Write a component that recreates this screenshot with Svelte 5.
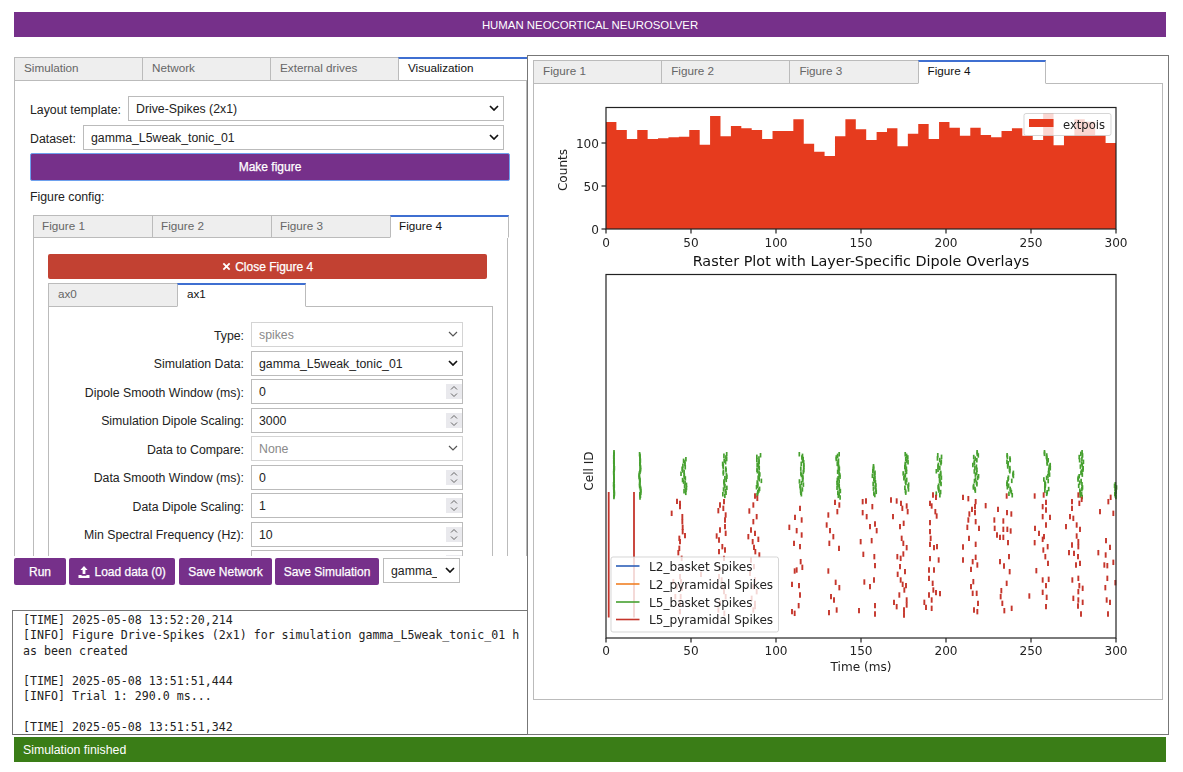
<script>
  const mainTabs = ['Simulation', 'Network', 'External drives', 'Visualization'];
  const figTabs = ['Figure 1', 'Figure 2', 'Figure 3', 'Figure 4'];
  const rows = [
    { label: 'Type:', kind: 'select', value: 'spikes', disabled: true },
    { label: 'Simulation Data:', kind: 'select', value: 'gamma_L5weak_tonic_01' },
    { label: 'Dipole Smooth Window (ms):', kind: 'number', value: '0' },
    { label: 'Simulation Dipole Scaling:', kind: 'number', value: '3000' },
    { label: 'Data to Compare:', kind: 'select', value: 'None', disabled: true },
    { label: 'Data Smooth Window (ms):', kind: 'number', value: '0' },
    { label: 'Data Dipole Scaling:', kind: 'number', value: '1' },
    { label: 'Min Spectral Frequency (Hz):', kind: 'number', value: '10' },
    { label: '', kind: 'number', value: '' }
  ];

  // histogram: bar tops read from the reference, in page px
  const tops = [216,240,267,240,267,265,262,260,240,284,198,259,228,235,240,267,243,243,208,281,305,318,259,208,238,270,246,235,289,251,222,267,216,233,257,233,255,262,243,235,257,270,190,286,257,208,215,255,279];
  const barW = 510 / tops.length;
  const histPath = 'M606 229 ' + tops.map((t, i) => {
    const y = 50 + t / 3;
    return `L${606 + i * barW} ${y} L${606 + (i + 1) * barW} ${y}`;
  }).join(' ') + ' L1116 229 Z';

  const ticks = [0, 50, 100, 150, 200, 250, 300].map((v) => ({ v, x: 606 + v * 1.7 }));

  const leftSpikes = [
    [321,184],[330,190],[330,200],[305,220],[337,230],[337,245],[338,262],[338,275],[328,295],[345,287],[330,305],[328,325],[325,338],[335,355],[336,385],[330,410],[310,425],[333,425],[320,440],[336,445],[332,470],[316,470],[330,490],[330,515],[393,403],
    [450,195],[462,185],[445,212],[460,205],[467,225],[465,240],[450,270],[465,260],[440,288],[467,280],[447,300],[457,320],[465,330],[447,335],[462,355],[450,385],[447,410],[455,420],[458,440],[462,455],[467,470],[450,490],[445,510],[463,520],
    [555,168],[562,175],[550,195],[538,213],[560,230],[550,245],[543,270],[555,280],[535,290],[548,305],[565,298],[552,322],[556,335],[568,345],[543,360],[552,380],[540,400],[555,420],[550,440],[560,455],[545,475],[555,490],[550,510],[555,500],
    [690,205],[675,232],[695,240],[658,262],[680,272],[695,285],[672,310],[690,320],[692,365],[697,382],[680,390],[674,393],[666,433],[687,437],[690,465],[686,497],[666,515],[674,520],
    [795,187],[808,195],[802,215],[775,225],[770,255],[780,272],[790,290],[778,310],[807,325],[775,393],[797,427],[808,443],[783,470],[792,480],[800,510],[777,518],[867,512]
  ];
  const rightSpikes = [
    [8,185],[18,183],[8,218],[20,230],[37,200],[30,260],[45,252],[50,272],[35,302],[2,305],[10,343],[43,350],[45,377],[13,426],[30,440],[42,420],[45,497],[45,522],
    [93,180],[110,183],[123,190],[127,205],[140,198],[143,215],[99,230],[120,260],[131,250],[125,295],[130,310],[140,323],[112,350],[122,355],[130,342],[120,380],[135,395],[113,403],[122,420],[128,433],[138,437],[133,450],[118,465],[102,487],[110,500],[140,480],[140,495],[132,510],[132,525],
    [219,165],[228,172],[210,190],[215,198],[226,215],[230,228],[210,248],[210,275],[212,295],[210,313],[222,323],[231,320],[210,356],[236,360],[222,390],[207,390],[207,415],[218,430],[220,450],[207,465],[228,458],[240,461],[193,487],[198,502],[215,480],[215,505],
    [309,172],[325,176],[347,185],[345,200],[336,208],[345,218],[328,222],[325,240],[347,245],[322,262],[357,265],[327,295],[347,313],[309,321],[347,352],[309,360],[338,365],[352,375],[333,388],[340,425],[333,440],[338,460],[350,460],[354,490],[342,510],[352,515],[377,197],
    [440,168],[414,208],[441,218],[454,222],[403,240],[430,243],[404,265],[430,268],[442,268],[452,273],[411,285],[420,292],[430,292],[444,308],[447,350],[420,365],[432,378],[449,395],[440,430],[424,452],[422,470],[427,490],[433,512],[455,505],
    [524,168],[551,165],[558,187],[548,200],[558,210],[548,230],[570,232],[558,255],[525,265],[537,280],[552,290],[524,308],[548,298],[563,320],[550,330],[556,350],[564,370],[529,392],[548,420],[566,418],[558,437],[548,457],[560,472],[508,468],[558,500],
    [636,185],[636,205],[655,165],[665,178],[658,190],[630,230],[640,235],[618,260],[650,255],[660,268],[650,288],[655,305],[636,315],[655,320],[627,338],[642,340],[654,350],[648,375],[660,370],[637,420],[655,415],[658,437],[655,455],[668,445],[640,475],[655,480],[668,487],[654,498],[663,522],
    [752,172],[745,185],[720,215],[760,220],[738,302],[750,322],[715,338],[737,345],[760,367],[733,375],[742,377],[742,415],[736,443],[740,480],[750,487],[744,522],[766,428]
  ];
  const redTicks = [
    ...leftSpikes.map(([x, y]) => ({ x: 570 + x / 3, y: 440 + y / 3 })),
    ...rightSpikes.map(([x, y]) => ({ x: 860 + x / 3, y: 440 + y / 3 }))
  ];

  // green bursts: centre x, first y, last y, spread (page px)
  const bursts = [
    [614, 450, 496, 0.3], [640, 452, 496, 0.6], [684, 457, 492, 2.2], [725, 452, 495, 1.8],
    [759, 453, 494, 2], [802, 452, 493, 2.2], [838.5, 452, 496, 2],
    [874.5, 464, 494, 1.6], [906, 452, 492, 2], [939, 453, 494, 2.4], [976, 450, 490, 2.4],
    [1010, 453, 494, 2.6], [1047, 450, 493, 2.6], [1081, 450, 496, 2.6], [1115, 482, 496, 1.2]
  ];
  const hash = (a, b) => {
    const v = Math.sin(a * 12.9898 + b * 78.233) * 43758.5453;
    return (v - Math.floor(v)) * 2 - 1;
  };
  const greenTicks = bursts.flatMap(([cx, y0, y1, s], b) => {
    const out = [];
    for (let y = y0; y < y1; y += 1.6) {
      out.push({ x: cx + hash(y, b) * s + Math.sin(y * 0.22 + b) * s * 0.4, y });
    }
    return out;
  });

  const legend = [
    { name: 'L2_basket Spikes', color: '#2c5fb8', y: 566 },
    { name: 'L2_pyramidal Spikes', color: '#f07f24', y: 584 },
    { name: 'L5_basket Spikes', color: '#46a02f', y: 602 },
    { name: 'L5_pyramidal Spikes', color: '#c5352b', y: 619.5 }
  ];
</script>

<div class="page">
  <header class="banner">HUMAN NEOCORTICAL NEUROSOLVER</header>

  <div class="main">
    <section class="left">
      <div class="config">
        <div class="tabs main-tabs">
          {#each mainTabs as t, i}
            <div class="tab" class:active={i === 3}>{t}</div>
          {/each}
        </div>
        <div class="config-body">
          <div class="field first">
            <span class="field-label">Layout template:</span>
            <div class="sel grow">
              <span>Drive-Spikes (2x1)</span>
              <svg class="chev" viewBox="0 0 10 6"><path d="M1 1l4 4 4-4" /></svg>
            </div>
          </div>
          <div class="field second">
            <span class="field-label">Dataset:</span>
            <div class="sel grow">
              <span>gamma_L5weak_tonic_01</span>
              <svg class="chev" viewBox="0 0 10 6"><path d="M1 1l4 4 4-4" /></svg>
            </div>
          </div>
          <button class="btn make">Make figure</button>
          <div class="fig-config">Figure config:</div>

          <div class="tabs fig-tabs">
            {#each figTabs as t, i}
              <div class="tab" class:active={i === 3}>{t}</div>
            {/each}
          </div>
          <div class="fig-body">
            <button class="btn close">
              <svg class="x" viewBox="0 0 10 10"><path d="M1.5 1.5l7 7M8.5 1.5l-7 7" /></svg>
              Close Figure 4
            </button>
            <div class="tabs ax-tabs">
              <div class="tab">ax0</div>
              <div class="tab active">ax1</div>
            </div>
            <div class="ax-body">
              {#each rows as r}
                <div class="row">
                  <span class="row-label">{r.label}</span>
                  <div class="sel row-ctl" class:disabled={r.disabled}>
                    <span>{r.value}</span>
                    {#if r.kind === 'select'}
                      <svg class="chev" class:thin={r.disabled} viewBox="0 0 10 6"><path d="M1 1l4 4 4-4" /></svg>
                    {:else}
                      <span class="spin">
                        <svg viewBox="0 0 8 15"><path d="M1 5.5l3-3 3 3M1 9.5l3 3 3-3" /></svg>
                      </span>
                    {/if}
                  </div>
                </div>
              {/each}
            </div>
          </div>
        </div>
      </div>

      <div class="actions">
        <button class="btn run">Run</button>
        <button class="btn load">
          <svg class="up" viewBox="0 0 12 12"><path d="M6 0L2.4 4H4.6V8H7.4V4H9.6Z M0.5 9H3.6V9.8H8.4V9H11.5V12H0.5Z" /></svg>
          Load data (0)
        </button>
        <button class="btn net">Save Network</button>
        <button class="btn sim">Save Simulation</button>
        <div class="sel dl">
          <span class="dl-text">gamma_L</span>
          <svg class="chev" viewBox="0 0 10 6"><path d="M1 1l4 4 4-4" /></svg>
        </div>
      </div>

      <pre class="log">[TIME] 2025-05-08 13:52:20,214
[INFO] Figure Drive-Spikes (2x1) for simulation gamma_L5weak_tonic_01 h
as been created

[TIME] 2025-05-08 13:51:51,444
[INFO] Trial 1: 290.0 ms...

[TIME] 2025-05-08 13:51:51,342</pre>
    </section>

    <section class="right">
      <div class="tabs plot-tabs">
        {#each figTabs as t, i}
          <div class="tab" class:active={i === 3}>{t}</div>
        {/each}
      </div>
      <div class="plot-body">
        <svg class="plot" viewBox="534 84 628 615" width="628" height="615">
          <path d={histPath} fill="#e63b1e" />
          <rect x="606" y="107.5" width="510" height="121.5" class="axis" />
          {#each ticks as t}
            <line x1={t.x} x2={t.x} y1="229" y2="233.5" class="tick" />
            <text x={t.x} y="247" class="lbl" text-anchor="middle">{t.v}</text>
            <line x1={t.x} x2={t.x} y1="638" y2="642.5" class="tick" />
            <text x={t.x} y="655" class="lbl" text-anchor="middle">{t.v}</text>
          {/each}
          <line x1="601.5" x2="606" y1="229" y2="229" class="tick" />
          <line x1="601.5" x2="606" y1="186" y2="186" class="tick" />
          <line x1="601.5" x2="606" y1="143" y2="143" class="tick" />
          <text x="599" y="233.5" class="lbl" text-anchor="end">0</text>
          <text x="599" y="190.5" class="lbl" text-anchor="end">50</text>
          <text x="599" y="147.5" class="lbl" text-anchor="end">100</text>
          <text class="lbl" text-anchor="middle" transform="translate(567 170) rotate(-90)">Counts</text>

          <rect x="1024" y="113.5" width="87" height="22" rx="2" class="legend-box" />
          <rect x="1029" y="119" width="24.5" height="8" fill="#e63b1e" />
          <text x="1063" y="128.5" class="lbl small">extpois</text>

          <text x="861" y="266" class="title" text-anchor="middle">Raster Plot with Layer-Specific Dipole Overlays</text>

          <line x1="608.7" x2="608.7" y1="492" y2="617.5" stroke="#c5352b" stroke-width="1.8" />
          <line x1="634" x2="634" y1="492" y2="617.5" stroke="#c5352b" stroke-width="1.8" />
          {#each greenTicks as t}
            <line x1={t.x} x2={t.x} y1={t.y} y2={t.y + 4.5} stroke="#46a02f" stroke-width="1.7" />
          {/each}
          {#each redTicks as t}
            <line x1={t.x} x2={t.x} y1={t.y - 2.7} y2={t.y + 2.7} stroke="#c5352b" stroke-width="1.9" />
          {/each}
          <rect x="606" y="274.5" width="510" height="363.5" class="axis" />

          <rect x="611" y="557" width="167.5" height="75" rx="2" class="legend-box" />
          {#each legend as l}
            <line x1="616" x2="639.5" y1={l.y} y2={l.y} stroke={l.color} stroke-width="1.6" />
            <text x="649" y={l.y + 4.5} class="lbl">{l.name}</text>
          {/each}

          <text class="lbl" text-anchor="middle" transform="translate(593 471) rotate(-90)">Cell ID</text>
          <text x="861" y="671" class="lbl" text-anchor="middle">Time (ms)</text>
        </svg>
      </div>
    </section>
  </div>

  <footer class="status">Simulation finished</footer>
</div>

<style>
  :global(body) {
    margin: 0;
    background: #fff;
  }
  .page {
    width: 1183px;
    height: 772px;
    box-sizing: border-box;
    padding-top: 12px;
    display: flex;
    flex-direction: column;
    font-family: "Liberation Sans", Arial, sans-serif;
    font-size: 12.3px;
    color: #222;
    overflow: hidden;
  }
  .banner {
    margin: 0 17px 0 14px;
    height: 25px;
    flex: none;
    background: #76308a;
    color: #fff;
    font-size: 11.4px;
    line-height: 26px;
    text-align: center;
  }
  .main {
    margin: 18px 0 0 12px;
    height: 680px;
    flex: none;
    display: flex;
  }
  .left {
    width: 516px;
    flex: none;
    display: flex;
    flex-direction: column;
  }
  .config {
    margin: 2px 0 0 2px;
    width: 513px;
    height: 499px;
    flex: none;
    overflow: hidden;
    display: flex;
    flex-direction: column;
  }
  .tabs {
    display: flex;
    flex: none;
  }
  .tab {
    flex: none;
    box-sizing: border-box;
    background: #eee;
    border: 1px solid #bbb;
    border-right-width: 0;
    color: #666;
    padding-left: 9px;
    font-size: 11.7px;
  }
  .tab.active {
    background: #fff;
    color: #111;
    border-top: 2px solid #3f6fd1;
    border-bottom-color: transparent;
    border-right-width: 1px;
  }
  .main-tabs .tab {
    width: 128px;
    height: 24px;
    line-height: 20px;
  }
  .main-tabs .tab.active {
    width: 129px;
    line-height: 18px;
    border-right: none;
    box-shadow: inset 0 -1px 0 #fff;
  }
  .config-body {
    flex: 1;
    min-height: 0;
    box-sizing: border-box;
    margin-top: -1px;
    padding: 15px 15px 0;
    border: 1px solid #bbb;
    border-bottom: none;
  }
  .field {
    display: flex;
    align-items: center;
    height: 25px;
  }
  .field.second {
    margin-top: 4px;
  }
  .field-label {
    flex: none;
    padding-top: 2px;
  }
  .first .field-label {
    width: 98px;
  }
  .second .field-label {
    width: 53px;
  }
  .field .grow {
    flex: none;
  }
  .first .grow {
    width: 376px;
  }
  .second .grow {
    width: 421px;
  }
  .sel {
    position: relative;
    box-sizing: border-box;
    height: 25px;
    border: 1px solid #bbb;
    background: #fff;
    padding-left: 7px;
    line-height: 25px;
    color: #222;
  }
  .chev {
    position: absolute;
    right: 4px;
    top: 8px;
    width: 10px;
    height: 6px;
    fill: none;
    stroke: #111;
    stroke-width: 1.7;
  }
  .chev.thin {
    stroke: #555;
    stroke-width: 1.2;
  }
  .btn {
    display: block;
    box-sizing: border-box;
    border: none;
    background: #76308a;
    color: #fff;
    font: 400 12px "Liberation Sans", Arial, sans-serif;
    -webkit-text-stroke: 0.25px #fff;
    border-radius: 2px;
    padding: 0;
    text-align: center;
  }
  .make {
    width: 480px;
    height: 28px;
    margin: 3px 0 0 0;
    border: 1px solid #6ea1ee;
  }
  .fig-config {
    margin-top: 9px;
    height: 14px;
    line-height: 14px;
  }
  .fig-tabs {
    margin: 11px 0 0 3px;
  }
  .fig-tabs .tab {
    width: 119px;
    height: 23px;
    line-height: 20px;
    padding-left: 8px;
  }
  .fig-tabs .tab.active {
    line-height: 18px;
    position: relative;
    z-index: 1;
  }
  .fig-body {
    margin: -1px 0 0 3px;
    width: 475px;
    height: 400px;
    box-sizing: border-box;
    border: 1px solid #bbb;
    padding: 16px 0 0 14px;
  }
  .close {
    width: 439px;
    height: 25px;
    background: #c24132;
  }
  .x {
    width: 9px;
    height: 9px;
    fill: none;
    stroke: #fff;
    stroke-width: 2;
    margin-right: 1px;
  }
  .ax-tabs {
    margin-top: 4px;
  }
  .ax-tabs .tab {
    width: 129px;
    height: 24px;
    line-height: 20px;
  }
  .ax-tabs .tab.active {
    line-height: 18px;
    position: relative;
    z-index: 1;
  }
  .ax-body {
    margin-top: -1px;
    width: 445px;
    height: 300px;
    box-sizing: border-box;
    border: 1px solid #bbb;
    padding-top: 15px;
    display: flex;
    flex-direction: column;
    gap: 3.55px;
  }
  .row {
    display: flex;
    align-items: center;
    height: 25px;
    flex: none;
  }
  .row-label {
    width: 195px;
    text-align: right;
    flex: none;
    padding-top: 2px;
  }
  .row-ctl {
    width: 212px;
    flex: none;
    margin-left: 7px;
  }
  .row-ctl.disabled {
    border-color: #d4d4d4;
    color: #8a8a8a;
  }
  .spin {
    position: absolute;
    right: 0;
    top: 4px;
    width: 16px;
    height: 15px;
    background: #e9e9ed;
    display: flex;
    justify-content: center;
  }
  .spin svg {
    width: 8px;
    height: 15px;
    fill: none;
    stroke: #666;
    stroke-width: 1;
  }
  .actions {
    margin: 2px 0 0 2px;
    display: flex;
    align-items: flex-start;
    height: 27px;
    flex: none;
  }
  .actions .btn {
    height: 27px;
  }
  .run {
    width: 52px;
  }
  .load {
    width: 106px;
    margin-left: 3px;
  }
  .net {
    width: 93px;
    margin-left: 4px;
  }
  .sim {
    width: 104px;
    margin-left: 3px;
  }
  .up {
    width: 12px;
    height: 12px;
    fill: #fff;
    vertical-align: -2px;
    margin-right: 1px;
  }
  .dl {
    width: 77px;
    margin-left: 4px;
    overflow: hidden;
  }
  .dl-text {
    display: block;
    width: 46px;
    overflow: hidden;
    white-space: nowrap;
  }
  .log {
    margin: 25px 0 0;
    width: 517px;
    height: 125px;
    box-sizing: border-box;
    flex: none;
    overflow: hidden;
    border: 1px solid #777;
    border-bottom-color: #666;
    padding: 2px 0 0 10px;
    font: 11.62px/15.3px "DejaVu Sans Mono", monospace;
    color: #222;
    white-space: pre;
  }
  .right {
    width: 642px;
    height: 680px;
    flex: none;
    box-sizing: border-box;
    margin-left: -1px;
    border: 1px solid #777;
    padding: 4px 4px 0 5px;
    display: flex;
    flex-direction: column;
    background: #fff;
    position: relative;
  }
  .plot-tabs .tab {
    width: 128.2px;
    height: 24px;
    line-height: 20px;
  }
  .plot-tabs .tab.active {
    line-height: 18px;
    position: relative;
    z-index: 1;
  }
  .plot-body {
    margin-top: -1px;
    width: 630px;
    height: 617px;
    box-sizing: border-box;
    border: 1px solid #bbb;
  }
  .plot {
    display: block;
    filter: blur(0.3px);
  }
  .axis {
    fill: none;
    stroke: #222;
    stroke-width: 1.2;
  }
  .tick {
    stroke: #222;
    stroke-width: 1.2;
  }
  .lbl {
    font: 12.1px "DejaVu Sans", sans-serif;
    fill: #222;
  }
  .lbl.small {
    font-size: 11.6px;
  }
  .title {
    font: 14.4px "DejaVu Sans", sans-serif;
    fill: #111;
  }
  .legend-box {
    fill: #fff;
    fill-opacity: 0.8;
    stroke: #ccc;
    stroke-opacity: 0.8;
  }
  .status {
    margin: 2px 17px 0 14px;
    height: 25px;
    flex: none;
    background: #3a7d17;
    color: #fff;
    line-height: 27px;
    padding-left: 9px;
  }
</style>
